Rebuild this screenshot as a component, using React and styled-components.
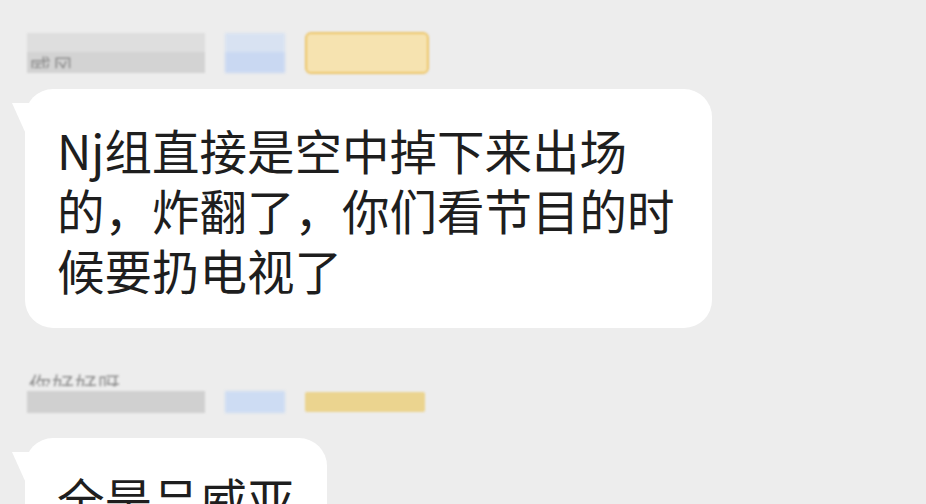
import React from 'react';
import styled, { createGlobalStyle } from 'styled-components';

const GlobalStyle = createGlobalStyle`
  html, body {
    margin: 0;
    padding: 0;
    background: #ededed;
  }
  body {
    font-family: "Noto Sans CJK SC", "Noto Sans", sans-serif;
    overflow: hidden;
  }
`;

const messages = [
  {
    id: 1,
    name: '威风',
    text: 'Nj组直接是空中掉下来出场的，炸翻了，你们看节目的时候要扔电视了',
    badge: true,
  },
  {
    id: 2,
    name: '你好好呀',
    text: '全是吕威亚',
    badge: false,
  },
];

export default function App() {
  return (
    <Page>
      <GlobalStyle />
      {messages.map((m) => (
        <MessageGroup key={m.id}>
          <SenderRow>
            <NameMask $tall={m.badge}>
              <NameText $top={m.badge}>{m.name}</NameText>
            </NameMask>
            <TagMask $tall={m.badge} />
            <LevelBadge $outlined={m.badge} />
          </SenderRow>
          <Bubble>{m.text}</Bubble>
        </MessageGroup>
      ))}
    </Page>
  );
}

const Page = styled.div`
  width: 926px;
  height: 504px;
  box-sizing: border-box;
  padding: 33px 0 0 25px;
  display: flex;
  flex-direction: column;
  gap: 54px;
  background: #ededed;
`;

const MessageGroup = styled.div`
  display: flex;
  flex-direction: column;
  gap: 16px;
  align-items: flex-start;
`;

const SenderRow = styled.div`
  display: flex;
  align-items: center;
  gap: 20px;
  height: 40px;
  padding-left: 2px;
`;

const NameMask = styled.div`
  position: relative;
  width: 178px;
  height: ${(p) => (p.$tall ? '40px' : '22px')};
  background: ${(p) =>
    p.$tall
      ? 'linear-gradient(180deg, #dedede 0 48%, #d3d3d3 48% 100%)'
      : '#d0d0d0'};
  filter: blur(1px);
  overflow: ${(p) => (p.$tall ? 'hidden' : 'visible')};
`;

const NameText = styled.span`
  position: absolute;
  left: 2px;
  bottom: ${(p) => (p.$top ? '-8px' : '14px')};
  font-size: 22px;
  color: #8f8f8f;
  letter-spacing: 1px;
  clip-path: inset(0 0 40% 0);
`;

const TagMask = styled.div`
  width: 60px;
  height: ${(p) => (p.$tall ? '40px' : '22px')};
  background: ${(p) =>
    p.$tall
      ? 'linear-gradient(180deg, #d8e2f2 0 48%, #c9d8f2 48% 100%)'
      : '#cddcf3'};
  filter: blur(1.5px);
`;

const LevelBadge = styled.div`
  width: 120px;
  height: ${(p) => (p.$outlined ? '38px' : '20px')};
  border-radius: ${(p) => (p.$outlined ? '6px' : '2px')};
  border: ${(p) => (p.$outlined ? '2px solid #ecc56a' : 'none')};
  background: ${(p) => (p.$outlined ? '#f6e3b0' : '#ebd48f')};
  filter: blur(1px);
`;

const Bubble = styled.div`
  position: relative;
  max-width: 623px;
  padding: 31px 32px 28px;
  background: #ffffff;
  border-radius: 28px;
  font-size: 47.5px;
  line-height: 60px;
  color: #1e1e1e;
  word-break: break-all;

  &::before {
    content: '';
    position: absolute;
    left: -13px;
    top: 14px;
    width: 30px;
    height: 30px;
    background: #ffffff;
    clip-path: polygon(0 0, 100% 0, 100% 100%, 45% 100%);
  }
`;
